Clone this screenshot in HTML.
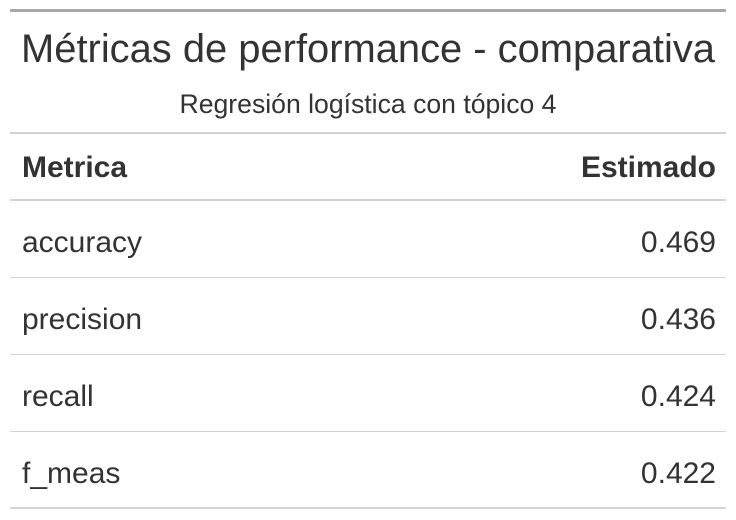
<!DOCTYPE html>
<html><head><meta charset="utf-8"><style>
body{margin:0;width:736px;height:520px;background:#fff;font-family:"Liberation Sans",sans-serif;color:#333;position:relative;overflow:hidden}
.l{position:absolute;left:10px;width:716px}
.t{position:absolute;white-space:nowrap}
</style></head><body>
<div class="l" style="top:9px;height:3px;background:#A8A8A8"></div>
<div class="t" style="left:0;width:736px;text-align:center;top:27px;font-size:39.9px">Métricas de performance - comparativa</div>
<div class="t" style="left:0;width:736px;text-align:center;top:89px;font-size:26.6px">Regresión logística con tópico 4</div>
<div class="l" style="top:132px;height:2px;background:#D3D3D3"></div>
<div class="t" style="left:22px;top:151px;font-size:30px;font-weight:bold">Metrica</div>
<div class="t" style="right:20px;top:151px;font-size:30px;font-weight:bold">Estimado</div>
<div class="l" style="top:199px;height:2px;background:#D3D3D3"></div>
<div class="t" style="left:22px;top:226px;font-size:30px">accuracy</div>
<div class="t" style="right:20px;top:226px;font-size:30px">0.469</div>
<div class="l" style="top:277px;height:1px;background:#D3D3D3"></div>
<div class="t" style="left:22px;top:303px;font-size:30px">precision</div>
<div class="t" style="right:20px;top:303px;font-size:30px">0.436</div>
<div class="l" style="top:354px;height:1px;background:#D3D3D3"></div>
<div class="t" style="left:22px;top:380px;font-size:30px">recall</div>
<div class="t" style="right:20px;top:380px;font-size:30px">0.424</div>
<div class="l" style="top:431px;height:1px;background:#D3D3D3"></div>
<div class="t" style="left:22px;top:457px;font-size:30px">f_meas</div>
<div class="t" style="right:20px;top:457px;font-size:30px">0.422</div>
<div class="l" style="top:507px;height:2px;background:#D3D3D3"></div>
</body></html>
